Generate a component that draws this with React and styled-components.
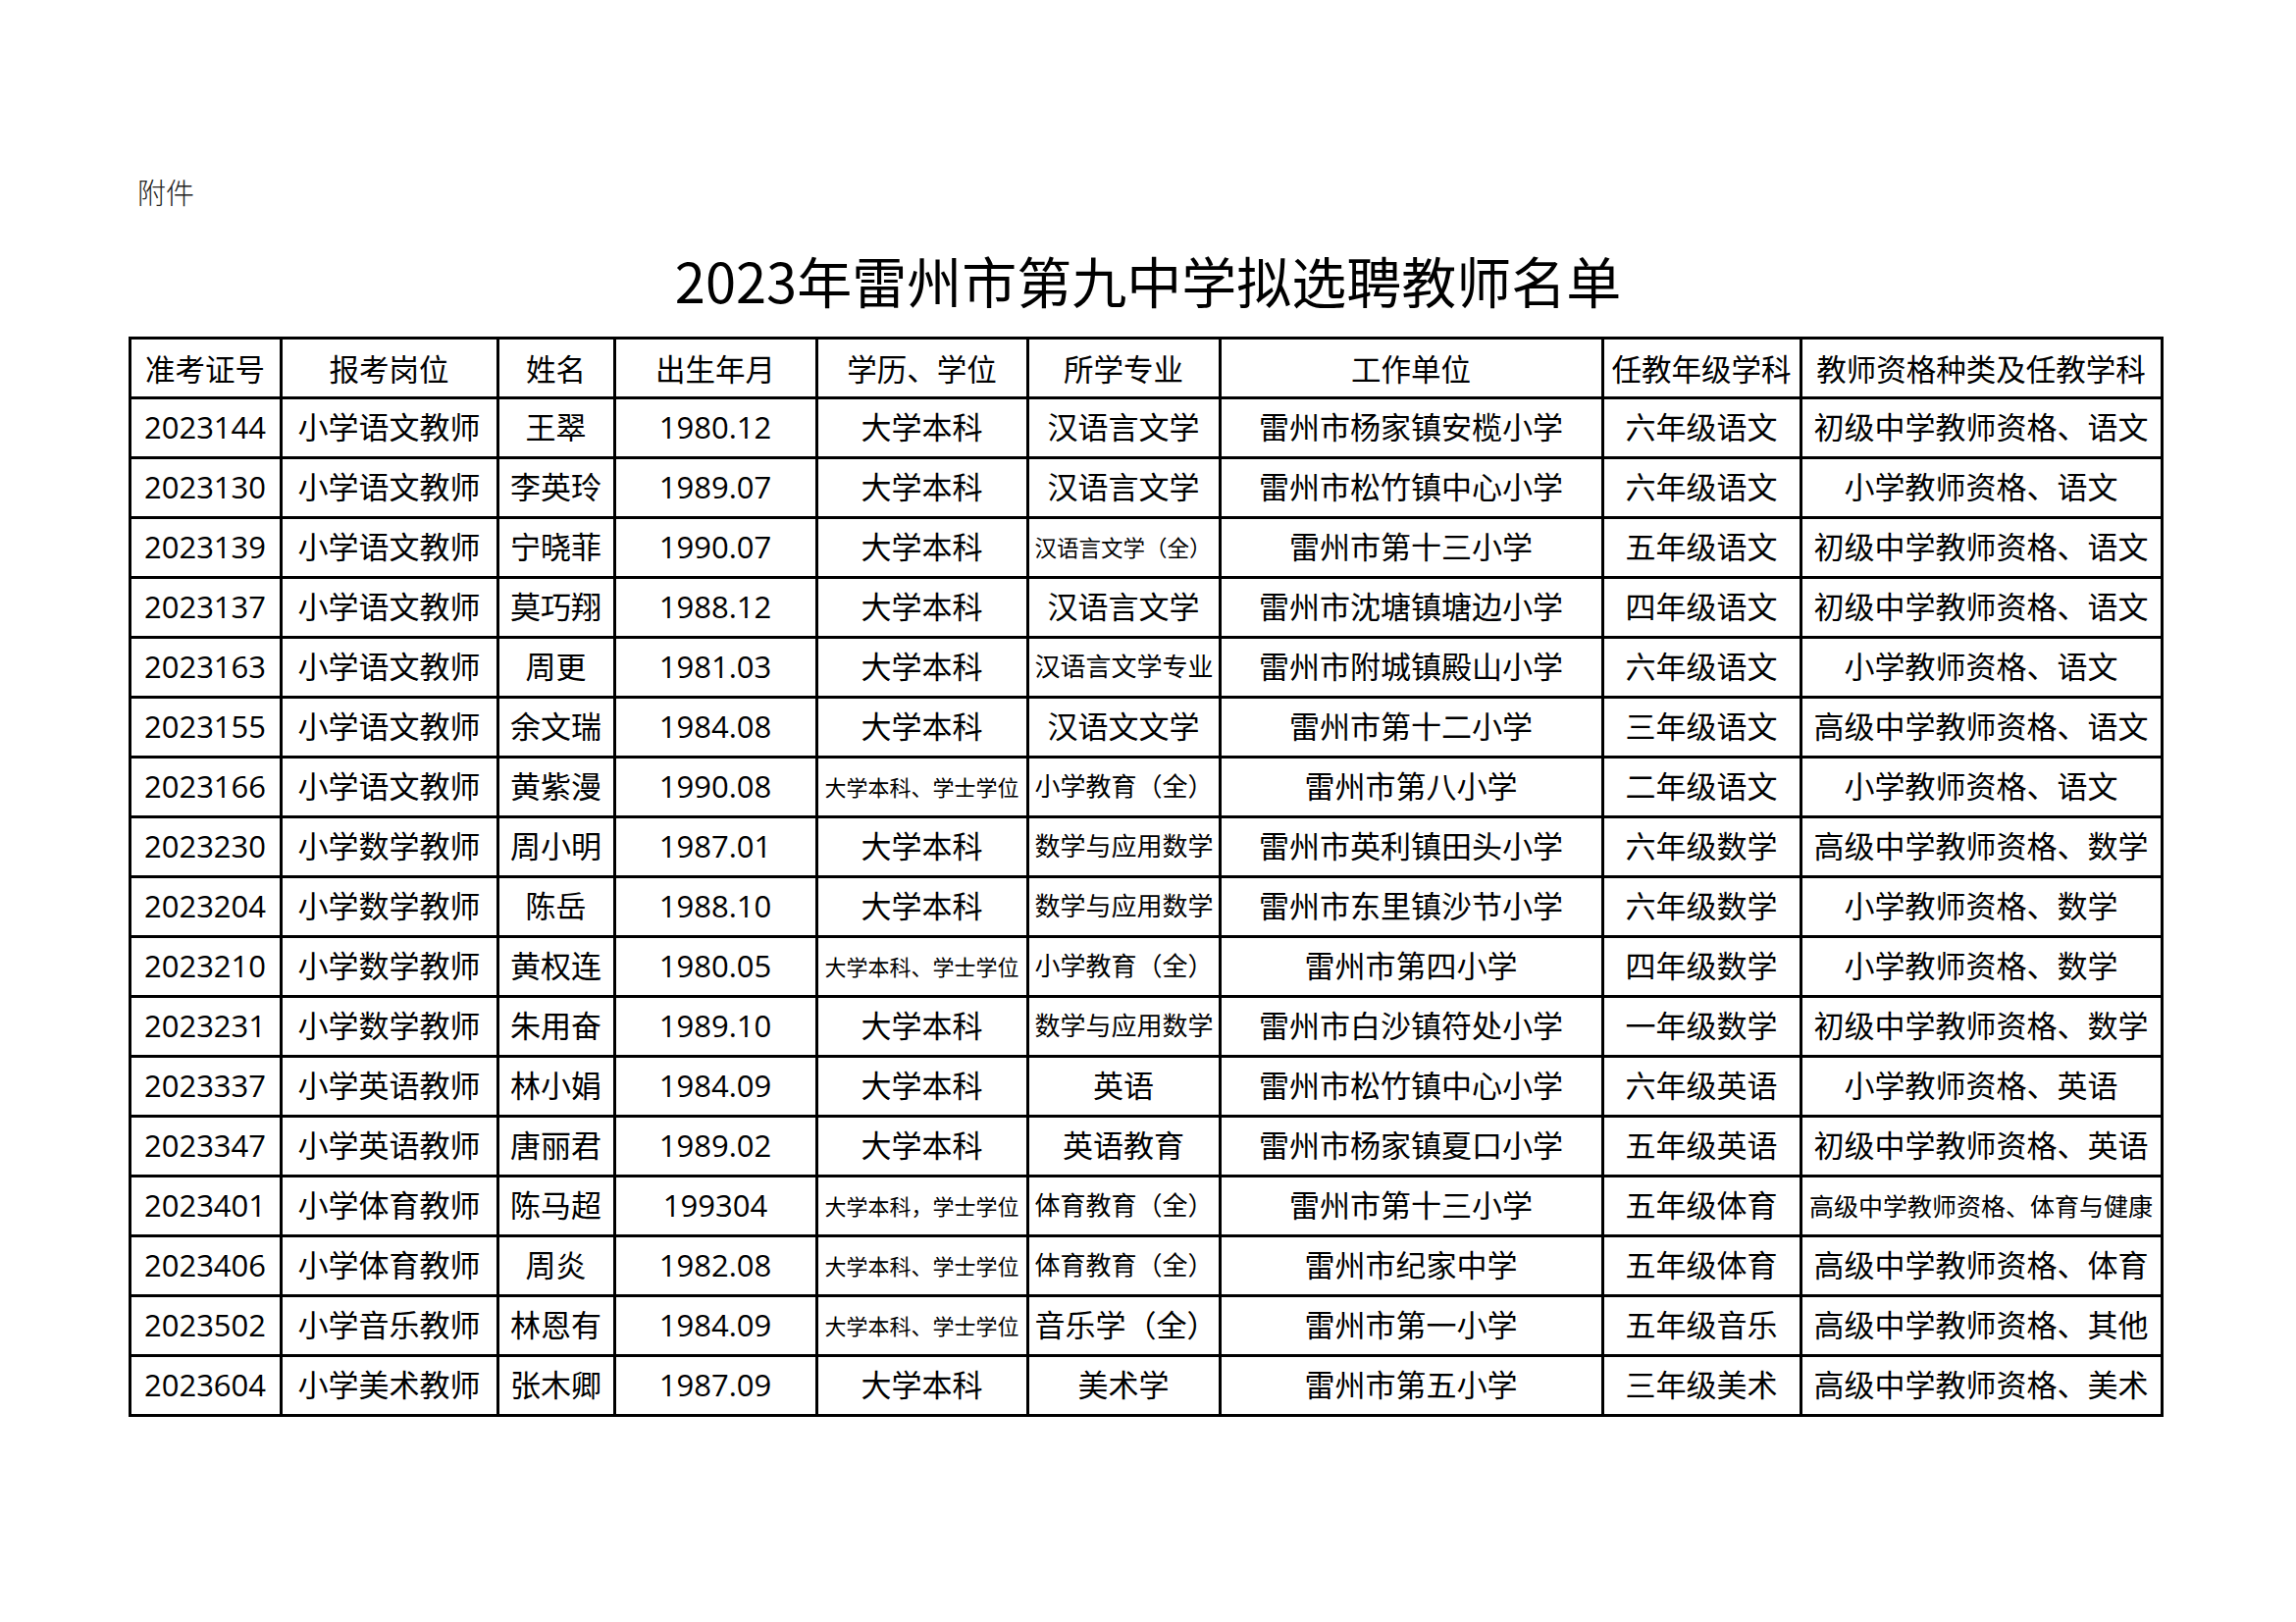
import React from "react";
import styled, { createGlobalStyle } from "styled-components";

const Global = createGlobalStyle`
  html, body { margin: 0; padding: 0; background: #fff; }
  body { font-family: "Open Sans", "Noto Sans CJK SC", sans-serif; color: #000; }
`;

const Page = styled.div`
  width: 2340px;
  height: 1653px;
  box-sizing: border-box;
  padding: 175px 0 0 0;
  display: flex;
  flex-direction: column;
  align-items: center;
  background: #fff;
`;

const Attachment = styled.div`
  align-self: flex-start;
  margin-left: 140px;
  font-family: "Noto Sans CJK SC", sans-serif;
  font-weight: 300;
  font-size: 29px;
  line-height: 40px;
  color: #222;
`;

const Title = styled.h1`
  margin: 35px 0 23px 0;
  font-family: "Noto Sans CJK SC", sans-serif;
  font-weight: 400;
  font-size: 56px;
  line-height: 70px;
  color: #000;
`;

const Table = styled.table`
  width: ${(p) => p.$width}px;
  margin-right: 5px;
  table-layout: fixed;
  border-collapse: collapse;
  border: 3px solid #000;
`;

const HeadCell = styled.th`
  height: 58px;
  padding: 0;
  border: 3px solid #000;
  font-weight: 400;
  font-size: 30.5px;
  text-align: center;
  white-space: nowrap;
  overflow: hidden;
`;

const Cell = styled.td`
  height: 58px;
  padding: ${(p) => (p.$align === "left" ? "0 0 0 6px" : "0")};
  border: 3px solid #000;
  font-size: ${(p) => p.$size || 31}px;
  text-align: ${(p) => p.$align || "center"};
  white-space: nowrap;
  overflow: hidden;
  line-height: 1.2;
`;

const widths = [154, 221, 119, 206, 215, 196, 390, 202, 368];
const totalWidth = widths.reduce((a, b) => a + b, 0);
const headers = [
  "准考证号",
  "报考岗位",
  "姓名",
  "出生年月",
  "学历、学位",
  "所学专业",
  "工作单位",
  "任教年级学科",
  "教师资格种类及任教学科",
];

const deg = { t: "大学本科、学士学位", s: 22 };
const math = { t: "数学与应用数学", s: 26, a: "left" };
const eduPrimary = { t: "小学教育（全）", s: 26, a: "left" };
const eduPE = { t: "体育教育（全）", s: 26, a: "left" };
const rows = [
  ["2023144", "小学语文教师", "王翠", "1980.12", "大学本科", "汉语言文学", "雷州市杨家镇安榄小学", "六年级语文", "初级中学教师资格、语文"],
  ["2023130", "小学语文教师", "李英玲", "1989.07", "大学本科", "汉语言文学", "雷州市松竹镇中心小学", "六年级语文", "小学教师资格、语文"],
  ["2023139", "小学语文教师", "宁晓菲", "1990.07", "大学本科", { t: "汉语言文学（全）", s: 22.5, a: "left" }, "雷州市第十三小学", "五年级语文", "初级中学教师资格、语文"],
  ["2023137", "小学语文教师", "莫巧翔", "1988.12", "大学本科", "汉语言文学", "雷州市沈塘镇塘边小学", "四年级语文", "初级中学教师资格、语文"],
  ["2023163", "小学语文教师", "周更", "1981.03", "大学本科", { t: "汉语言文学专业", s: 26, a: "left" }, "雷州市附城镇殿山小学", "六年级语文", "小学教师资格、语文"],
  ["2023155", "小学语文教师", "余文瑞", "1984.08", "大学本科", "汉语文文学", "雷州市第十二小学", "三年级语文", "高级中学教师资格、语文"],
  ["2023166", "小学语文教师", "黄紫漫", "1990.08", deg, eduPrimary, "雷州市第八小学", "二年级语文", "小学教师资格、语文"],
  ["2023230", "小学数学教师", "周小明", "1987.01", "大学本科", math, "雷州市英利镇田头小学", "六年级数学", "高级中学教师资格、数学"],
  ["2023204", "小学数学教师", "陈岳", "1988.10", "大学本科", math, "雷州市东里镇沙节小学", "六年级数学", "小学教师资格、数学"],
  ["2023210", "小学数学教师", "黄权连", "1980.05", deg, eduPrimary, "雷州市第四小学", "四年级数学", "小学教师资格、数学"],
  ["2023231", "小学数学教师", "朱用奋", "1989.10", "大学本科", math, "雷州市白沙镇符处小学", "一年级数学", "初级中学教师资格、数学"],
  ["2023337", "小学英语教师", "林小娟", "1984.09", "大学本科", "英语", "雷州市松竹镇中心小学", "六年级英语", "小学教师资格、英语"],
  ["2023347", "小学英语教师", "唐丽君", "1989.02", "大学本科", "英语教育", "雷州市杨家镇夏口小学", "五年级英语", "初级中学教师资格、英语"],
  ["2023401", "小学体育教师", "陈马超", "199304", { t: "大学本科，学士学位", s: 22 }, eduPE, "雷州市第十三小学", "五年级体育", { t: "高级中学教师资格、体育与健康", s: 25 }],
  ["2023406", "小学体育教师", "周炎", "1982.08", deg, eduPE, "雷州市纪家中学", "五年级体育", "高级中学教师资格、体育"],
  ["2023502", "小学音乐教师", "林恩有", "1984.09", deg, { t: "音乐学（全）", s: 31, a: "left" }, "雷州市第一小学", "五年级音乐", "高级中学教师资格、其他"],
  ["2023604", "小学美术教师", "张木卿", "1987.09", "大学本科", "美术学", "雷州市第五小学", "三年级美术", "高级中学教师资格、美术"],
];

export default function App() {
  return (
    <>
      <Global />
      <Page>
        <Attachment>附件</Attachment>
        <Title>2023年雷州市第九中学拟选聘教师名单</Title>
        <Table $width={totalWidth}>
          <colgroup>
            {widths.map((w, i) => (
              <col key={i} style={{ width: w }} />
            ))}
          </colgroup>
          <thead>
            <tr>
              {headers.map((h) => (
                <HeadCell key={h}>{h}</HeadCell>
              ))}
            </tr>
          </thead>
          <tbody>
            {rows.map((r) => (
              <tr key={r[0]}>
                {r.map((c, i) =>
                  typeof c === "string" ? (
                    <Cell key={i}>{c}</Cell>
                  ) : (
                    <Cell key={i} $size={c.s} $align={c.a}>
                      {c.t}
                    </Cell>
                  )
                )}
              </tr>
            ))}
          </tbody>
        </Table>
      </Page>
    </>
  );
}
